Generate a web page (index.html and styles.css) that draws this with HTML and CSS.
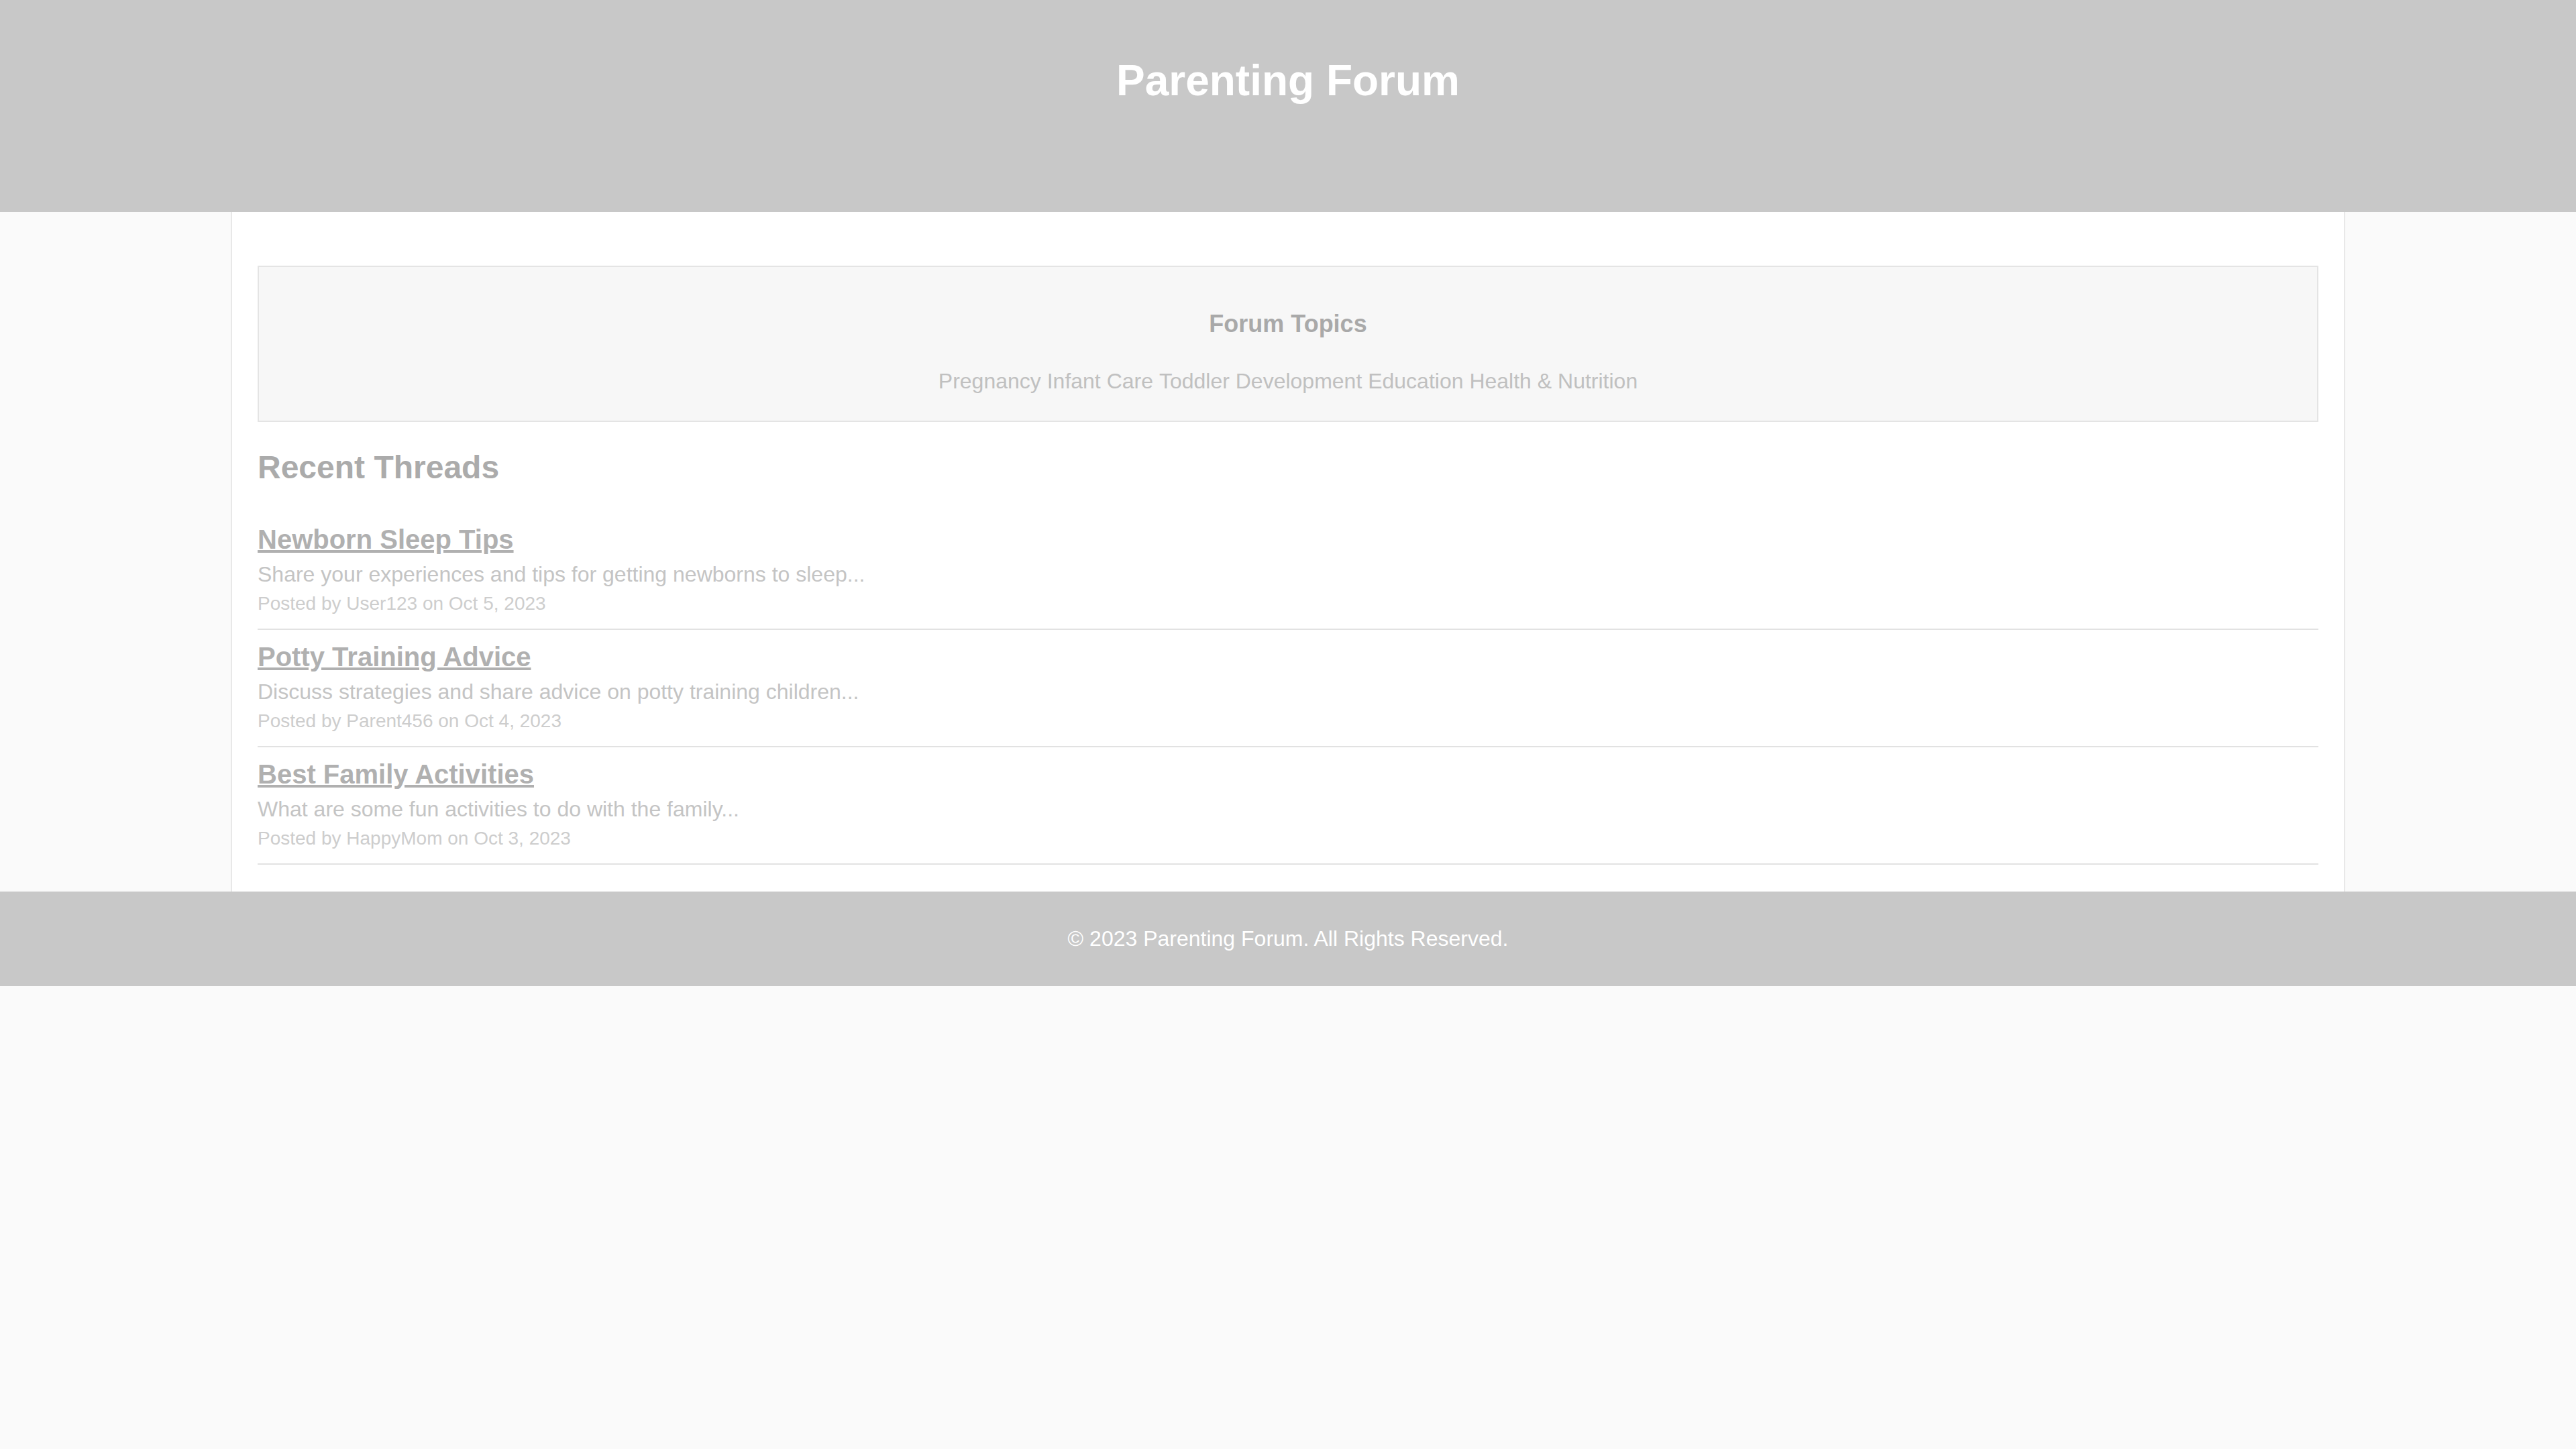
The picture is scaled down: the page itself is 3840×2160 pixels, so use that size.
FILE: index.html
```html
<!DOCTYPE html>
<html lang="en">
<head>
<meta charset="utf-8">
<title>Parenting Forum</title>
<link rel="stylesheet" href="styles.css">
</head>
<body>
<header class="site-header">
  <h1 class="site-title">Parenting Forum</h1>
</header>
<main class="container">
  <section class="topics-box">
    <h3 class="topics-title">Forum Topics</h3>
    <ul class="topics">
      <li>Pregnancy</li>
      <li>Infant Care</li>
      <li>Toddler Development</li>
      <li>Education</li>
      <li>Health &amp; Nutrition</li>
    </ul>
  </section>
  <h2 class="section-title">Recent Threads</h2>
  <div class="thread">
    <h3 class="thread-title"><a href="#">Newborn Sleep Tips</a></h3>
    <p class="thread-desc">Share your experiences and tips for getting newborns to sleep...</p>
    <p class="thread-meta">Posted by User123 on Oct 5, 2023</p>
  </div>
  <div class="thread">
    <h3 class="thread-title"><a href="#">Potty Training Advice</a></h3>
    <p class="thread-desc">Discuss strategies and share advice on potty training children...</p>
    <p class="thread-meta">Posted by Parent456 on Oct 4, 2023</p>
  </div>
  <div class="thread">
    <h3 class="thread-title"><a href="#">Best Family Activities</a></h3>
    <p class="thread-desc">What are some fun activities to do with the family...</p>
    <p class="thread-meta">Posted by HappyMom on Oct 3, 2023</p>
  </div>
</main>
<footer class="site-footer">
  <p class="copyright">&copy; 2023 Parenting Forum. All Rights Reserved.</p>
</footer>
</body>
</html>
```

FILE: styles.css
```css
html, body {
  margin: 0;
  padding: 0;
}

body {
  background: #fafafa;
  font-family: "Liberation Sans", Arial, sans-serif;
  font-size: 32px;
  color: #bbbbbb;
}

.site-header {
  background: #c8c8c8;
  padding: 40px 0;
  text-align: center;
}

.site-title {
  margin: 43px 0 119px;
  font-size: 64px;
  font-weight: bold;
  color: #ffffff;
}

.container {
  width: 3072px;
  margin: 0 auto;
  padding: 40px 38px;
  background: #ffffff;
  border-left: 2px solid #e8e8e8;
  border-right: 2px solid #e8e8e8;
}

.topics-box {
  background: #f7f7f7;
  border: 2px solid #e4e4e4;
  padding: 28px 28px 30px;
  margin: 40px 0;
  text-align: center;
}

.topics-title {
  margin: 36px 0;
  font-size: 36px;
  font-weight: bold;
  color: #a9a9a9;
}

.topics {
  list-style: none;
  margin: 0;
  padding: 10px 0;
  font-size: 32px;
  color: #c0c0c0;
}

.topics li {
  display: inline;
}

.section-title {
  margin: 40px 0;
  font-size: 48px;
  font-weight: bold;
  color: #ababab;
}

.thread {
  padding: 18px 0 21px;
  border-bottom: 2px solid #e2e2e2;
}

.thread-title {
  margin: 0 0 11px;
  font-size: 40px;
  font-weight: bold;
}

.thread-title a {
  color: #b0b0b0;
  text-decoration: underline;
}

.thread-desc {
  margin: 0 0 9px;
  font-size: 32px;
  color: #c4c4c4;
}

.thread-meta {
  margin: 0;
  font-size: 28px;
  color: #cdcdcd;
}

.site-footer {
  background: #c8c8c8;
  padding: 20px 0;
  text-align: center;
}

.copyright {
  margin: 32px 0;
  font-size: 32px;
  color: #ffffff;
}
```
